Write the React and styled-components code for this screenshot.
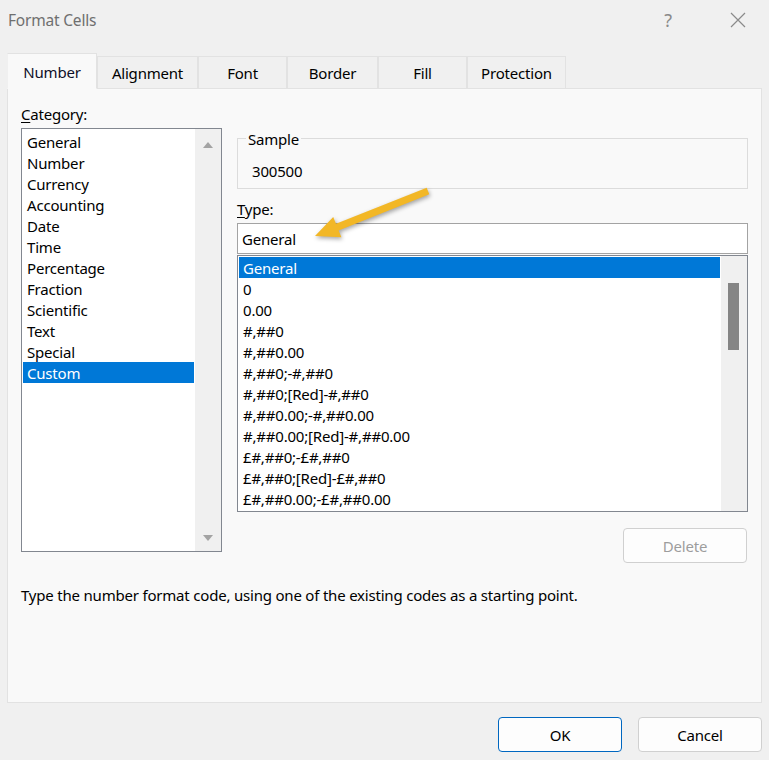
import React from 'react';
import styled, { createGlobalStyle } from 'styled-components';

const GlobalStyle = createGlobalStyle`
  html, body {
    margin: 0;
    padding: 0;
    background: #f0f0f0;
  }
  * {
    box-sizing: border-box;
  }
`;

const Window = styled.div`
  position: relative;
  width: 769px;
  height: 760px;
  background: #f0f0f0;
  font-family: 'Noto Sans', 'Open Sans', sans-serif;
  font-size: 15px;
  letter-spacing: -0.2px;
  color: #000;
  overflow: hidden;
`;

const TitleBar = styled.div`
  display: flex;
  align-items: center;
  height: 40px;
  padding-left: 8px;
`;

const Title = styled.div`
  font-size: 15.5px;
  color: #6f6f6f;
`;

const TitleButtons = styled.div`
  display: flex;
  margin-left: auto;
  gap: 24px;
  padding-right: 8px;
`;

const TitleButton = styled.div`
  width: 46px;
  height: 40px;
  display: flex;
  align-items: center;
  justify-content: center;
  color: #8a8a8a;
  font-size: 18px;
`;

const TabStrip = styled.div`
  display: flex;
  align-items: flex-end;
  height: 35px;
  margin-top: 13px;
  padding-left: 7px;
  position: relative;
  z-index: 1;
`;

const Tab = styled.div`
  width: ${(p) => p.$w}px;
  height: ${(p) => (p.$active ? 36 : 33)}px;
  margin-bottom: -1px;
  display: flex;
  align-items: center;
  justify-content: center;
  background: ${(p) => (p.$active ? '#f9f9f9' : '#f0f0f0')};
  border: 1px solid #e2e2e2;
  border-bottom: ${(p) => (p.$active ? '1px solid #f9f9f9' : '1px solid #e2e2e2')};
  border-left-color: ${(p) => (p.$active ? '#f0f0f0' : '#e2e2e2')};
  padding-top: ${(p) => (p.$active ? 1 : 0)}px;
  color: ${(p) => (p.$active ? '#0f0f28' : '#000')};
`;

const Panel = styled.div`
  margin: 0 7px;
  height: 615px;
  background: #f9f9f9;
  border: 1px solid #e2e2e2;
  padding: 15px 13px 0 13px;
`;

const Columns = styled.div`
  display: grid;
  grid-template-columns: 201px 511px;
  column-gap: 15px;
`;

const Column = styled.div`
  display: flex;
  flex-direction: column;
`;

const Label = styled.div`
  line-height: 20px;
  height: 20px;
  margin-top: ${(p) => p.$mt || 0}px;
  u {
    text-decoration-thickness: 1px;
    text-underline-offset: 2px;
  }
`;

const ListBox = styled.div`
  display: flex;
  height: ${(p) => p.$h}px;
  margin-top: ${(p) => p.$mt || 0}px;
  background: #fff;
  border: 1px solid #828790;
  overflow: hidden;
`;

const ListItems = styled.div`
  flex: 1;
  padding: ${(p) => p.$pt}px 1px 0 1px;
  overflow: hidden;
`;

const ListRow = styled.div`
  height: 21px;
  line-height: 20px;
  padding: 1px 0 0 4px;
  white-space: nowrap;
  background: ${(p) => (p.$selected ? '#0078d7' : 'transparent')};
  color: ${(p) => (p.$selected ? '#fff' : '#000')};
`;

const ScrollTrack = styled.div`
  position: relative;
  width: 26px;
  background: #f0f0f0;
  display: flex;
  flex-direction: column;
  align-items: center;
  justify-content: space-between;
  padding: 12px 0 9px;
`;

const ScrollThumb = styled.div`
  position: absolute;
  left: 7px;
  top: ${(p) => p.$top}px;
  width: 11px;
  height: ${(p) => p.$h}px;
  background: #858585;
`;

const GroupBox = styled.div`
  position: relative;
  margin-top: 34px;
  height: 51px;
  border: 1px solid #dcdcdc;
  padding: 22px 0 0 14px;
  line-height: 20px;
`;

const Legend = styled.div`
  position: absolute;
  left: 8px;
  top: -10px;
  padding: 0 2px;
  background: #f9f9f9;
  line-height: 20px;
`;

const TextInput = styled.div`
  margin-top: 4px;
  height: 31px;
  border: 1px solid #a3a3a3;
  background: #fff;
  display: flex;
  align-items: center;
  padding-left: 4px;
`;

const Button = styled.div`
  width: 124px;
  height: 35px;
  display: flex;
  align-items: center;
  justify-content: center;
  border: 1px solid ${(p) => (p.$primary ? '#0067c0' : '#d0d0d0')};
  border-radius: 4px;
  background: #fdfdfd;
  color: ${(p) => (p.$disabled ? '#9d9d9d' : '#000')};
`;

const DeleteRow = styled.div`
  display: flex;
  justify-content: flex-end;
  margin-top: 16px;
  padding-right: 1px;
`;

const Description = styled.div`
  margin-top: 22px;
  line-height: 20px;
`;

const Footer = styled.div`
  display: flex;
  justify-content: flex-end;
  gap: 16px;
  padding: 14px 7px 0 0;
`;

const ArrowOverlay = styled.svg`
  position: absolute;
  left: 300px;
  top: 180px;
  width: 140px;
  height: 70px;
  pointer-events: none;
  filter: drop-shadow(1px 2px 2px rgba(0, 0, 0, 0.35));
`;

const Triangle = ({ down }) => (
  <svg width="12" height="8" viewBox="0 0 12 8">
    <polygon points={down ? '1,1 11,1 6,7' : '1,7 11,7 6,1'} fill="#a3a3a3" />
  </svg>
);

const tabs = [
  { label: 'Number', w: 90, active: true },
  { label: 'Alignment', w: 101 },
  { label: 'Font', w: 89 },
  { label: 'Border', w: 91 },
  { label: 'Fill', w: 89 },
  { label: 'Protection', w: 99 },
];

const categories = [
  'General',
  'Number',
  'Currency',
  'Accounting',
  'Date',
  'Time',
  'Percentage',
  'Fraction',
  'Scientific',
  'Text',
  'Special',
  'Custom',
];

const formats = [
  'General',
  '0',
  '0.00',
  '#,##0',
  '#,##0.00',
  '#,##0;-#,##0',
  '#,##0;[Red]-#,##0',
  '#,##0.00;-#,##0.00',
  '#,##0.00;[Red]-#,##0.00',
  '£#,##0;-£#,##0',
  '£#,##0;[Red]-£#,##0',
  '£#,##0.00;-£#,##0.00',
];

export default function App() {
  return (
    <>
      <GlobalStyle />
      <Window>
        <TitleBar>
          <Title>Format Cells</Title>
          <TitleButtons>
            <TitleButton>?</TitleButton>
            <TitleButton>
              <svg width="16" height="16" viewBox="0 0 16 16">
                <path d="M1 1 L15 15 M15 1 L1 15" stroke="#8a8a8a" strokeWidth="1.2" />
              </svg>
            </TitleButton>
          </TitleButtons>
        </TitleBar>

        <TabStrip>
          {tabs.map((t) => (
            <Tab key={t.label} $w={t.w} $active={t.active}>
              {t.label}
            </Tab>
          ))}
        </TabStrip>

        <Panel>
          <Columns>
            <Column>
              <Label>
                <u>C</u>ategory:
              </Label>
              <ListBox $h={424} $mt={4}>
                <ListItems $pt={2}>
                  {categories.map((c) => (
                    <ListRow key={c} $selected={c === 'Custom'}>
                      {c}
                    </ListRow>
                  ))}
                </ListItems>
                <ScrollTrack>
                  <Triangle />
                  <Triangle down />
                </ScrollTrack>
              </ListBox>
            </Column>

            <Column>
              <GroupBox>
                <Legend>Sample</Legend>
                300500
              </GroupBox>
              <Label $mt={10}>
                <u>T</u>ype:
              </Label>
              <TextInput>General</TextInput>
              <ListBox $h={257} $mt={1}>
                <ListItems $pt={1}>
                  {formats.map((f, i) => (
                    <ListRow key={f + i} $selected={i === 0}>
                      {f}
                    </ListRow>
                  ))}
                </ListItems>
                <ScrollTrack>
                  <ScrollThumb $top={27} $h={67} />
                </ScrollTrack>
              </ListBox>
              <DeleteRow>
                <Button $disabled>Delete</Button>
              </DeleteRow>
            </Column>
          </Columns>
          <Description>
            Type the number format code, using one of the existing codes as a starting point.
          </Description>
        </Panel>

        <Footer>
          <Button $primary>OK</Button>
          <Button>Cancel</Button>
        </Footer>

        <ArrowOverlay viewBox="0 0 140 70">
          <polygon
            points="15,56 33.2,36.9 36,43.8 126.7,7.7 129.3,14.3 38.6,50.4 41.4,57.3"
            fill="#f2b726"
          />
        </ArrowOverlay>
      </Window>
    </>
  );
}
